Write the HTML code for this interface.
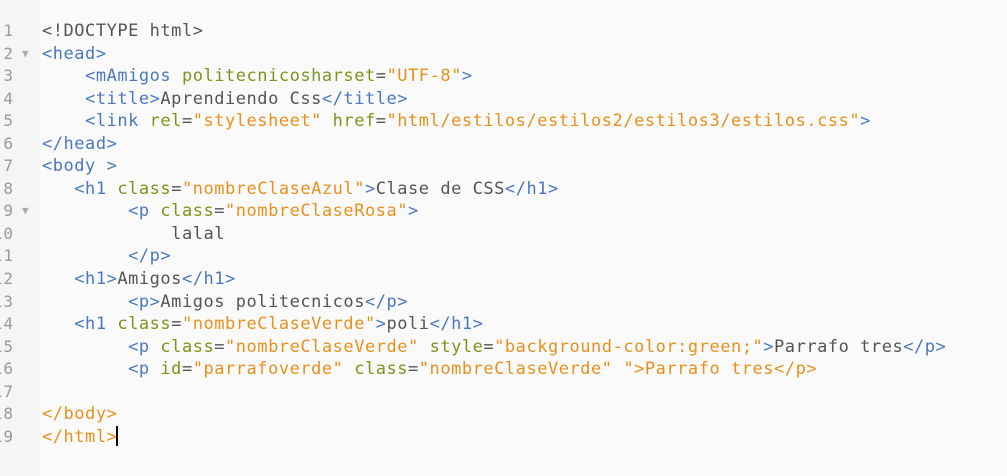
<!DOCTYPE html>
<html><head><style>
html,body{margin:0;padding:0;width:1007px;height:476px;overflow:hidden;background:#fafafa;}
.g{position:absolute;left:0;top:0;width:40px;height:476px;background:#f5f5f5;}
.code{position:absolute;left:0;top:20px;width:1007px;font-family:"DejaVu Sans Mono","Liberation Mono",monospace;font-size:17px;letter-spacing:0.53px;line-height:22.56px;color:#555;}
.l{position:relative;height:22.56px;}
.n{position:absolute;right:calc(100% - 14px);color:#999;text-align:right;white-space:pre;font-size:16px;letter-spacing:1px}
.t{position:absolute;left:42px;white-space:pre;}
.f{position:absolute;left:22px;color:#aaa;font-size:11px;letter-spacing:0}
.b{color:#4a78c2}.a{color:#7a961a}.s{color:#e8901c}.o{color:#e8901c}
.cur{display:inline-block;width:2px;height:20px;background:#000;vertical-align:-4px;margin-left:-1px}
</style></head><body>
<div class="g"></div>
<div class="code"><div class="l"><span class="n">1</span><span class="t">&lt;!DOCTYPE html&gt;</span></div><div class="l"><span class="n">2</span><span class="f">▼</span><span class="t"><span class="b">&lt;head&gt;</span></span></div><div class="l"><span class="n">3</span><span class="t">    <span class="b">&lt;mAmigos</span> <span class="a">politecnicosharset</span>=<span class="s">"UTF-8"</span><span class="b">&gt;</span></span></div><div class="l"><span class="n">4</span><span class="t">    <span class="b">&lt;title&gt;</span>Aprendiendo Css<span class="b">&lt;/title&gt;</span></span></div><div class="l"><span class="n">5</span><span class="t">    <span class="b">&lt;link</span> <span class="a">rel</span>=<span class="s">"stylesheet"</span> <span class="a">href</span>=<span class="s">"html/estilos/estilos2/estilos3/estilos.css"</span><span class="b">&gt;</span></span></div><div class="l"><span class="n">6</span><span class="t"><span class="b">&lt;/head&gt;</span></span></div><div class="l"><span class="n">7</span><span class="t"><span class="b">&lt;body &gt;</span></span></div><div class="l"><span class="n">8</span><span class="t">   <span class="b">&lt;h1</span> <span class="a">class</span>=<span class="s">"nombreClaseAzul"</span><span class="b">&gt;</span>Clase de CSS<span class="b">&lt;/h1&gt;</span></span></div><div class="l"><span class="n">9</span><span class="f">▼</span><span class="t">        <span class="b">&lt;p</span> <span class="a">class</span>=<span class="s">"nombreClaseRosa"</span><span class="b">&gt;</span></span></div><div class="l"><span class="n">10</span><span class="t">            lalal</span></div><div class="l"><span class="n">11</span><span class="t">        <span class="b">&lt;/p&gt;</span></span></div><div class="l"><span class="n">12</span><span class="t">   <span class="b">&lt;h1&gt;</span>Amigos<span class="b">&lt;/h1&gt;</span></span></div><div class="l"><span class="n">13</span><span class="t">        <span class="b">&lt;p&gt;</span>Amigos politecnicos<span class="b">&lt;/p&gt;</span></span></div><div class="l"><span class="n">14</span><span class="t">   <span class="b">&lt;h1</span> <span class="a">class</span>=<span class="s">"nombreClaseVerde"</span><span class="b">&gt;</span>poli<span class="b">&lt;/h1&gt;</span></span></div><div class="l"><span class="n">15</span><span class="t">        <span class="b">&lt;p</span> <span class="a">class</span>=<span class="s">"nombreClaseVerde"</span> <span class="a">style</span>=<span class="s">"background-color:green;"</span><span class="b">&gt;</span>Parrafo tres<span class="b">&lt;/p&gt;</span></span></div><div class="l"><span class="n">16</span><span class="t">        <span class="b">&lt;p</span> <span class="a">id</span>=<span class="s">"parrafoverde"</span> <span class="a">class</span>=<span class="s">"nombreClaseVerde"</span> <span class="s">"&gt;Parrafo tres&lt;/p&gt;</span></span></div><div class="l"><span class="n">17</span><span class="t"></span></div><div class="l"><span class="n">18</span><span class="t"><span class="o">&lt;/body&gt;</span></span></div><div class="l"><span class="n">19</span><span class="t"><span class="o">&lt;/html&gt;</span><span class="cur"></span></span></div></div>
</body></html>
